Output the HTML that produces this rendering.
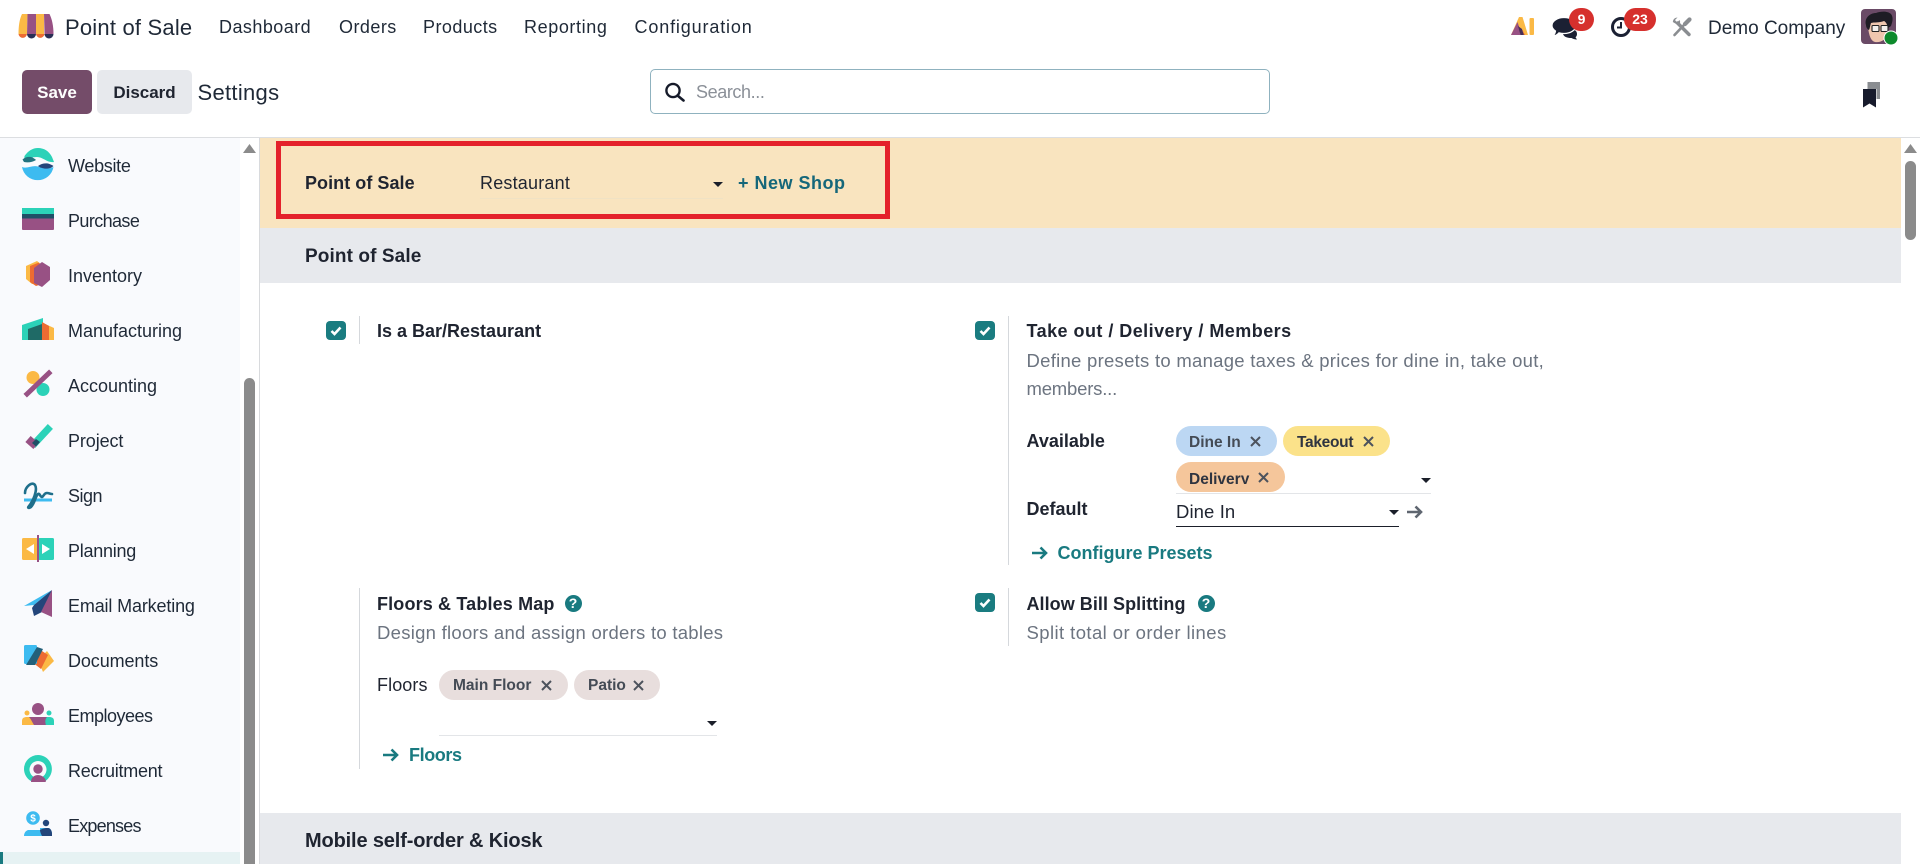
<!DOCTYPE html>
<html lang="en"><head><meta charset="utf-8"><title>Settings</title>
<style>
html,body{margin:0;padding:0;width:1920px;height:864px;overflow:hidden;background:#fff}
body{position:relative;font-family:"Liberation Sans",Arial,sans-serif;color:#1f2430;font-size:18px}
.a{position:absolute}
.t{position:absolute;white-space:nowrap;line-height:24px;height:24px}
.b{font-weight:700}
.nav{letter-spacing:.45px;color:#1f2937}
.side{font-size:18px;left:68px;color:#1f2937}
.d{color:#6c7480;font-size:18.5px;letter-spacing:.27px}
.l{color:#197a80;font-weight:700}
.tag{position:absolute;height:30px;border-radius:15px}
.tt{position:absolute;white-space:nowrap;font-weight:700;font-size:15.5px;line-height:20px;color:#444b55}
.ck{position:absolute;width:20px;height:19px;border-radius:4px;background:#1a7c80}
.v{position:absolute;width:1px;background:#d5d8dc}
svg{position:absolute;overflow:visible}
.car{position:absolute;width:0;height:0;border-left:5px solid transparent;border-right:5px solid transparent;border-top:5px solid #1b1f2a}
.un{position:absolute;height:1px;background:#e3e5e8}
.q{position:absolute;width:17px;height:17px;border-radius:50%;background:#197a80;color:#fff;font-size:14px;font-weight:700;line-height:17px;text-align:center}
</style></head><body>

<!-- navbar -->
<svg style="left:18px;top:14px" width="36" height="25" viewBox="0 0 36 25">
<path d="M4 0H9.500L9 20H0.500C0.500 12 1.500 5 4 0Z" fill="#fbb945"/>
<path d="M9.500 0H18V20H9Z" fill="#985184"/>
<path d="M18 0H26V20H18Z" fill="#fbb945"/>
<path d="M26 0H31.500C34 5 35.500 12 35.500 20H26.500Z" fill="#985184"/>
<path d="M.5 20H9A4.300 4.500 0 0 1 .5 20Z" fill="#ed6b32"/>
<path d="M9 20H18A4.500 4.500 0 0 1 9 20Z" fill="#2a2f55"/>
<path d="M18 20H26.500A4.300 4.500 0 0 1 18 20Z" fill="#ed6b32"/>
<path d="M26.500 20H35.500A4.500 4.500 0 0 1 26.500 20Z" fill="#2a2f55"/>
</svg>
<div class="t" style="left:65px;top:16px;font-size:22px;letter-spacing:.2px;color:#1f2937">Point of Sale</div>
<div class="t nav" style="left:219px;top:15px">Dashboard</div>
<div class="t nav" style="left:339px;top:15px">Orders</div>
<div class="t nav" style="left:423px;top:15px">Products</div>
<div class="t nav" style="left:524px;top:15px;letter-spacing:.6px">Reporting</div>
<div class="t nav" style="left:634.500px;top:15px;letter-spacing:.85px">Configuration</div>

<!-- AI -->
<svg style="left:1511px;top:17px" width="24" height="19" viewBox="0 0 24 19">
<path d="M8 0H11.500L17 18H13L11 12H5.500L3.500 18H0Z" fill="#fbb945"/>
<path d="M6.500 5L8.500 11L9.500 18H0Z" fill="#985184"/>
<path d="M7 9L11 12L13 18H9.500Z" fill="#4a2f55"/>
<path d="M11 12L14 18H13Z" fill="#ed6b32"/>
<rect x="18.500" y="1" width="4.500" height="17" rx="1" fill="#fbb945"/>
</svg>
<!-- chat -->
<svg style="left:1552px;top:16px" width="28" height="24" viewBox="0 0 28 24">
<path d="M17 13C21 13 25 14 25 18C25 19.500 24.500 20.500 23.500 21.300L25 23.500C22.500 23.500 20.500 22.500 19.500 22C15 22 11 21 10.500 16Z" fill="#1b2033"/>
<path d="M12 1.500C18.500 1.500 24 5 24 9.500C24 14 18.500 17.500 12 17.500C10 17.500 8.500 17.200 7 16.800C5.500 18.500 3.500 20 1 20C2.500 18.500 3.300 16.500 3.500 15C1.300 13.500 0 11.700 0 9.500C0 5 5.500 1.500 12 1.500Z" fill="#1b2033" stroke="#fff" stroke-width="1.200"/>
</svg>
<div class="a" style="left:1569px;top:8px;width:25px;height:23px;border-radius:12px;background:#d6302d;color:#fff;font-weight:700;font-size:14px;line-height:23px;text-align:center">9</div>
<!-- clock -->
<svg style="left:1611px;top:16px" width="22" height="22" viewBox="0 0 22 22">
<circle cx="10" cy="11" r="8.500" fill="#fff" stroke="#1b2033" stroke-width="3"/>
<path d="M10 6V11.500H6" fill="none" stroke="#1b2033" stroke-width="2"/>
</svg>
<div class="a" style="left:1624px;top:8px;width:32px;height:23px;border-radius:12px;background:#d6302d;color:#fff;font-weight:700;font-size:14px;line-height:23px;text-align:center">23</div>
<!-- tools -->
<svg style="left:1672px;top:17px" width="20" height="20" viewBox="0 0 20 20">
<path d="M.8 5A4.500 4.500 0 0 1 5.500 .5L3 3L5 5.500L7.500 3A4.500 4.500 0 0 1 7 8L5 7.500Z" fill="#8a8d91"/>
<path d="M5.500 6L17 17.500" stroke="#8a8d91" stroke-width="3.400" stroke-linecap="round"/>
<path d="M2.500 18L11.500 8.500" stroke="#8a8d91" stroke-width="2.600" stroke-linecap="round"/>
<path d="M13 7L17.500 2.500" stroke="#8a8d91" stroke-width="4.200" stroke-linecap="round"/>
</svg>
<div class="t" style="left:1708px;top:17px;font-size:19px;color:#1f2937">Demo Company</div>
<!-- avatar -->
<svg style="left:1861px;top:9px" width="36" height="36" viewBox="0 0 36 36">
<rect width="35" height="35" rx="4" fill="#6a4a66"/>
<path d="M7 18C8 12 14 11 20 11C26 11 28 16 27 24C26 30 20 34 14 33C10 32 8 27 7 18Z" fill="#efc6ae"/>
<path d="M5 16C3 9 9 4 15 4C20 2 27 2 30 5C33 9 31 14 30 17L27 19C26 15 25 13 23 12C18 14 13 13 10 14C9 17 9 19 8 21C6 20 5 18 5 16Z" fill="#1e1c24"/>
<rect x="11" y="16.500" width="7" height="6" rx="1" fill="#f4f0ec" stroke="#222" stroke-width="1.100"/>
<rect x="20" y="16.500" width="7" height="6" rx="1" fill="#f4f0ec" stroke="#222" stroke-width="1.100"/>
<circle cx="30" cy="29" r="7.500" fill="#fff"/><circle cx="30" cy="29" r="6.500" fill="#0d8a2c"/>
</svg>

<!-- control panel -->
<div class="a" style="left:22px;top:70px;width:70px;height:44px;border-radius:5px;background:#744c69;color:#fff;font-weight:700;font-size:17px;line-height:46px;text-align:center">Save</div>
<div class="a" style="left:97px;top:70px;width:95px;height:44px;border-radius:5px;background:#e7e9ed;color:#1f2430;font-weight:700;font-size:17px;line-height:46px;text-align:center">Discard</div>
<div class="t" style="left:197.500px;top:81px;font-size:22px;letter-spacing:.3px;color:#1f2937">Settings</div>
<div class="a" style="left:650px;top:69px;width:618px;height:43px;border:1px solid #8fb2bf;border-radius:5px;background:#fff"></div>
<svg style="left:664px;top:82px" width="22" height="20" viewBox="0 0 22 20">
<circle cx="9" cy="8.500" r="6.600" fill="none" stroke="#161b2a" stroke-width="2.400"/>
<path d="M13.500 13.500L19.500 18.500" stroke="#161b2a" stroke-width="2.600" stroke-linecap="round"/>
</svg>
<div class="t" style="left:696px;top:80px;color:#8b9098;letter-spacing:-.4px">Search...</div>
<svg style="left:1862px;top:80px" width="20" height="28" viewBox="0 0 20 28">
<path d="M5.500 2H18V19H14.500V9H5.500Z" fill="#8a8d91"/>
<path d="M1 9H14V27.500L7.500 23.500L1 27.500Z" fill="#171b2c"/>
</svg>
<div class="a" style="left:0;top:137px;width:1920px;height:1px;background:#dcdee1"></div>

<!-- sidebar -->
<div class="a" style="left:0;top:138px;width:240px;height:726px;background:#f9fafd"></div>
<div class="a" style="left:0;top:852px;width:240px;height:12px;background:#e6f2f3"></div>
<div class="a" style="left:0;top:852px;width:3px;height:12px;background:#197a80"></div>
<div class="a" style="left:259px;top:138px;width:1px;height:726px;background:#d8dadd"></div>
<svg style="left:243px;top:144px" width="13" height="10"><path d="M6.500 0L13 9H0Z" fill="#8b8b8b"/></svg>
<div class="a" style="left:244px;top:378px;width:11px;height:486px;background:#8b8b8b;border-radius:5.500px 5.500px 0 0"></div>

<svg style="left:22px;top:148px" width="32" height="32" viewBox="0 0 32 32">
<path d="M2.500 8C6 3 10.500 0 16 0C22 0 27 3 30 9L32 14C25 15 21 9 15 9C10 9 6 10.500 2 13Z" fill="#2cd2b8"/>
<path d="M0.500 11.500C3 9 6 8.500 9 9C11 9.500 13 11 14 12C11 14 6 15 2 14Z" fill="#23737f"/>
<path d="M0 19C5 21 10 17 16 18.500C22 21 27 21 31.500 19A16 16 0 0 1 0 19Z" fill="#3dbbf0"/>
<path d="M16 18C19 15.500 23 15 26 15.500C28 16 30 17 31.500 18C29 20.500 25 21 22 20.500C19 20 17 19 16 18Z" fill="#23457a"/>
</svg>
<div class="t side" style="top:154px;letter-spacing:-.3px">Website</div>

<svg style="left:22px;top:208px" width="32" height="22" viewBox="0 0 32 22">
<path d="M0 0H32V6H0Z" fill="#2cd2b8"/><path d="M0 6H32V10.500H0Z" fill="#1f4f66"/><path d="M0 10.500H32V21A1 1 0 0 1 31 22H1A1 1 0 0 1 0 21Z" fill="#985184"/>
</svg>
<div class="t side" style="top:209px;letter-spacing:-.6px">Purchase</div>

<svg style="left:22px;top:259px" width="32" height="32" viewBox="0 0 32 32">
<path d="M4 7L15 2L20 6V24L10 25L4 20Z" fill="#fbb945"/>
<path d="M8 7L17 3.500L20 10V25L14 27L8 23Z" fill="#ed6b32"/>
<path d="M12 9L20 3L28 8V21L20 28L12 24Z" fill="#985184"/>
</svg>
<div class="t side" style="top:264px">Inventory</div>

<svg style="left:22px;top:314px" width="32" height="32" viewBox="0 0 32 32">
<path d="M0 26V11L21 4V26Z" fill="#2cd2b8"/>
<path d="M6 26V15L20 10V26Z" fill="#1f6a66"/>
<path d="M21 26V9L32 14V26Z" fill="#fbb945"/>
<path d="M20 26V8L27 12V26Z" fill="#ed6b32"/>
</svg>
<div class="t side" style="top:319px">Manufacturing</div>

<svg style="left:22px;top:369px" width="32" height="32" viewBox="0 0 32 32">
<circle cx="11" cy="8.500" r="6.500" fill="#fbb945"/><circle cx="21" cy="20.500" r="6.500" fill="#2cd2b8"/>
<path d="M5 25L27 4" stroke="#985184" stroke-width="5" stroke-linecap="square"/>
</svg>
<div class="t side" style="top:374px">Accounting</div>

<svg style="left:22px;top:424px" width="32" height="32" viewBox="0 0 32 32">
<path d="M13 19L26 5" stroke="#2cd2b8" stroke-width="7" stroke-linecap="square"/>
<path d="M6 15L14 22" stroke="#985184" stroke-width="8"/>
<path d="M10 19L14 22.500L18 18L14 15Z" fill="#1f4f66"/>
</svg>
<div class="t side" style="top:429px;letter-spacing:-.1px">Project</div>

<svg style="left:22px;top:479px" width="32" height="32" viewBox="0 0 32 32">
<path d="M2 21H30" stroke="#3dbbf0" stroke-width="3"/>
<path d="M3 14C3 8 10 2 13 6C16 11 11 22 7 27C5 29 7 29.500 9 28C13 24 13 18 16 15C18 14 18 18 20 18C22 17 22 14 25 14C27 14 28 15 30 15" fill="none" stroke="#1f6f8b" stroke-width="2.600" stroke-linecap="round"/>
</svg>
<div class="t side" style="top:484px;letter-spacing:-.5px">Sign</div>

<svg style="left:22px;top:535px" width="32" height="32" viewBox="0 0 32 32">
<rect x="0" y="3" width="16" height="22" rx="1.500" fill="#fbb945"/>
<rect x="16" y="3" width="16" height="22" rx="1.500" fill="#2cd2b8"/>
<rect x="15" y="0" width="2" height="27" fill="#985184"/>
<path d="M4 14L12 9V19Z" fill="#fff"/><path d="M28 14L20 9V19Z" fill="#fff"/>
</svg>
<div class="t side" style="top:539px;letter-spacing:-.25px">Planning</div>

<svg style="left:22px;top:590px" width="32" height="32" viewBox="0 0 32 32">
<path d="M2 16L30 0L12 15Z" fill="#3dbbf0"/>
<path d="M12 15L30 0L20 22L12 26L10 18Z" fill="#23457a"/>
<path d="M30 0V27L19 22Z" fill="#985184"/>
</svg>
<div class="t side" style="top:594px;letter-spacing:-.15px">Email Marketing</div>

<svg style="left:22px;top:645px" width="32" height="32" viewBox="0 0 32 32">
<path d="M16 15L25 6L32 16L21 27Z" fill="#fbb945"/>
<path d="M10 17L17 4L26 10L19 24Z" fill="#ed6b32"/>
<rect x="2" y="0" width="13" height="19" rx="1.500" fill="#3dbbf0"/>
<path d="M15 2L21 4L13 20H4Z" fill="#23607a"/>
</svg>
<div class="t side" style="top:649px;letter-spacing:-.1px">Documents</div>

<svg style="left:22px;top:700px" width="32" height="32" viewBox="0 0 32 32">
<circle cx="16" cy="9" r="6" fill="#985184"/>
<circle cx="5" cy="13" r="2.500" fill="#fbb945"/><circle cx="27" cy="13" r="2.500" fill="#2cd2b8"/>
<path d="M0 25V21C0 18 2 17 5 17H12V25Z" fill="#fbb945"/>
<path d="M32 25V21C32 18 30 17 27 17H20V25Z" fill="#2cd2b8"/>
<path d="M7 17H25C22 20 24 25 24 25H12C10 22 9 19 7 17Z" fill="#985184"/>
</svg>
<div class="t side" style="top:704px;letter-spacing:-.5px">Employees</div>

<svg style="left:22px;top:755px" width="32" height="32" viewBox="0 0 32 32">
<path d="M16 0A14 14 0 0 1 28 21C26 24 25 25 22 27L20 22A8.500 8.500 0 1 0 12 22L9 26C5 24 2 19 2 14A14 14 0 0 1 16 0Z" fill="#2cd2b8"/>
<circle cx="16" cy="14" r="4.700" fill="#985184"/>
<path d="M9 27C9 22 13 20 16 20C19 20 23 22 24 26C24 27 23 27 21 27Z" fill="#985184"/>
</svg>
<div class="t side" style="top:759px;letter-spacing:-.25px">Recruitment</div>

<svg style="left:22px;top:810px" width="32" height="32" viewBox="0 0 32 32">
<path d="M18 18H26C28.500 18 30 21 30 24V26H2C2 24 3 21 6 20L18 20Z" fill="#3dbbf0"/>
<path d="M18 20C20 19 22 18 26 18C28.500 18 30 21 30 24V26H20C19 24 18 22 18 20Z" fill="#23457a"/>
<circle cx="24" cy="13" r="3.200" fill="#23457a"/>
<circle cx="11" cy="8" r="6.800" fill="#3dbbf0"/>
<text x="11" y="11.500" text-anchor="middle" font-family="Liberation Sans,sans-serif" font-size="10" font-weight="700" fill="#fff">$</text>
</svg>
<div class="t side" style="top:814px;letter-spacing:-.8px">Expenses</div>

<!-- right scrollbar -->
<svg style="left:1904px;top:144px" width="13" height="10"><path d="M6.500 0L13 9H0Z" fill="#8b8b8b"/></svg>
<div class="a" style="left:1905px;top:161px;width:11px;height:79px;background:#8b8b8b;border-radius:5.500px"></div>

<!-- yellow band -->
<div class="a" style="left:260px;top:138px;width:1641px;height:90px;background:#f9e4bf"></div>
<div class="a" style="left:276px;top:141px;width:604px;height:68px;border:5px solid #e4212b"></div>
<div class="t b" style="left:305px;top:171px;font-size:18px;letter-spacing:.05px;color:#1f2430">Point of Sale</div>
<div class="t" style="left:480px;top:171px;letter-spacing:.2px;color:#1f2430">Restaurant</div>
<div class="un" style="left:480px;top:198px;width:243px;background:#f0e2c4"></div>
<div class="car" style="left:713px;top:182px"></div>
<div class="t b" style="left:738px;top:171px;letter-spacing:.5px;color:#15677a">+ New Shop</div>

<!-- section: Point of Sale -->
<div class="a" style="left:260px;top:228px;width:1641px;height:55px;background:#e7e9ed"></div>
<div class="t b" style="left:305px;top:245px;font-size:19px;letter-spacing:.1px;color:#1f2430">Point of Sale</div>

<!-- left col -->
<div class="ck" style="left:326px;top:321px"><svg style="left:4px;top:5px" width="12" height="10" viewBox="0 0 12 10"><path d="M1.500 5L4.500 8L10.500 1.500" fill="none" stroke="#fff" stroke-width="2.600"/></svg></div>
<div class="v" style="left:359px;top:316px;height:28px"></div>
<div class="t b" style="left:377px;top:319px">Is a Bar/Restaurant</div>

<div class="v" style="left:359px;top:588px;height:181px"></div>
<div class="t b" style="left:377px;top:592px;letter-spacing:.15px">Floors &amp; Tables Map</div>
<div class="q" style="left:564.500px;top:595px">?</div>
<div class="t d" style="left:377px;top:621px">Design floors and assign orders to tables</div>
<div class="t" style="left:377px;top:673px;letter-spacing:.1px">Floors</div>
<div class="tag" style="left:439px;top:670px;width:129px;background:#e8dedd"></div>
<div class="tt" style="left:453px;top:676px">Main Floor</div>
<svg style="left:541px;top:680px" width="11" height="11"><path d="M1 1L10 10M10 1L1 10" stroke="#4d535d" stroke-width="2"/></svg>
<div class="tag" style="left:574px;top:670px;width:86px;background:#e8dedd"></div>
<div class="tt" style="left:588px;top:676px">Patio</div>
<svg style="left:633px;top:680px" width="11" height="11"><path d="M1 1L10 10M10 1L1 10" stroke="#4d535d" stroke-width="2"/></svg>
<div class="car" style="left:707px;top:721px"></div>
<div class="un" style="left:439px;top:735px;width:278px"></div>
<svg style="left:382px;top:747px" width="17" height="16" viewBox="0 0 17 16"><path d="M1 8H15M9.500 2.500L15 8L9.500 13.500" fill="none" stroke="#197a80" stroke-width="2.600"/></svg>
<div class="t l" style="left:409px;top:743px;letter-spacing:-.4px">Floors</div>

<!-- right col -->
<div class="ck" style="left:975px;top:321px"><svg style="left:4px;top:5px" width="12" height="10" viewBox="0 0 12 10"><path d="M1.500 5L4.500 8L10.500 1.500" fill="none" stroke="#fff" stroke-width="2.600"/></svg></div>
<div class="v" style="left:1008px;top:316px;height:249px"></div>
<div class="t b" style="left:1026.500px;top:319px;letter-spacing:.46px">Take out / Delivery / Members</div>
<div class="t d" style="left:1026.500px;top:349px">Define presets to manage taxes &amp; prices for dine in, take out,</div>
<div class="t d" style="left:1026.500px;top:377px;letter-spacing:-.2px">members...</div>
<div class="t b" style="left:1026.500px;top:429px">Available</div>
<div class="tag" style="left:1176px;top:426px;width:101px;background:#bcd7f3"></div>
<div class="tt" style="left:1189px;top:433px">Dine In</div>
<svg style="left:1250px;top:436px" width="11" height="11"><path d="M1 1L10 10M10 1L1 10" stroke="#4d535d" stroke-width="2"/></svg>
<div class="tag" style="left:1283px;top:426px;width:107px;background:#fbe28a"></div>
<div class="tt" style="left:1297px;top:433px;letter-spacing:-.3px;color:#2f3440">Takeout</div>
<svg style="left:1363px;top:436px" width="11" height="11"><path d="M1 1L10 10M10 1L1 10" stroke="#4d535d" stroke-width="2"/></svg>
<div class="tag" style="left:1176px;top:462px;width:109px;background:#f5c69b"></div>
<div class="a" style="left:1189px;top:468px;width:62px;height:16px;overflow:hidden"><div class="tt" style="left:0;top:2px;color:#2f3440">Delivery</div></div>
<svg style="left:1258px;top:472px" width="11" height="11"><path d="M1 1L10 10M10 1L1 10" stroke="#4d535d" stroke-width="2"/></svg>
<div class="car" style="left:1421px;top:478px"></div>
<div class="un" style="left:1176px;top:493px;width:255px"></div>
<div class="t b" style="left:1026.500px;top:497px">Default</div>
<div class="t" style="left:1176px;top:500px;font-size:18.500px;letter-spacing:.1px">Dine In</div>
<div class="car" style="left:1389px;top:510px"></div>
<div class="a" style="left:1176px;top:526px;width:223px;height:1px;background:#1b1f2a"></div>
<svg style="left:1406px;top:504px" width="17" height="16" viewBox="0 0 17 16"><path d="M1 8H15M9.500 2.500L15 8L9.500 13.500" fill="none" stroke="#5f6670" stroke-width="2.600"/></svg>
<svg style="left:1031px;top:545px" width="17" height="16" viewBox="0 0 17 16"><path d="M1 8H15M9.500 2.500L15 8L9.500 13.500" fill="none" stroke="#197a80" stroke-width="2.600"/></svg>
<div class="t l" style="left:1057.500px;top:541px">Configure Presets</div>

<div class="ck" style="left:975px;top:593px"><svg style="left:4px;top:5px" width="12" height="10" viewBox="0 0 12 10"><path d="M1.500 5L4.500 8L10.500 1.500" fill="none" stroke="#fff" stroke-width="2.600"/></svg></div>
<div class="v" style="left:1008px;top:588px;height:58px"></div>
<div class="t b" style="left:1026.500px;top:592px;letter-spacing:.05px">Allow Bill Splitting</div>
<div class="q" style="left:1197.500px;top:595px">?</div>
<div class="t d" style="left:1026.500px;top:621px;letter-spacing:.42px">Split total or order lines</div>

<!-- section: Mobile -->
<div class="a" style="left:260px;top:813px;width:1641px;height:51px;background:#e7e9ed"></div>
<div class="t b" style="left:305px;top:829px;font-size:20px;letter-spacing:-.15px;color:#1f2430">Mobile self-order &amp; Kiosk</div>

</body></html>
